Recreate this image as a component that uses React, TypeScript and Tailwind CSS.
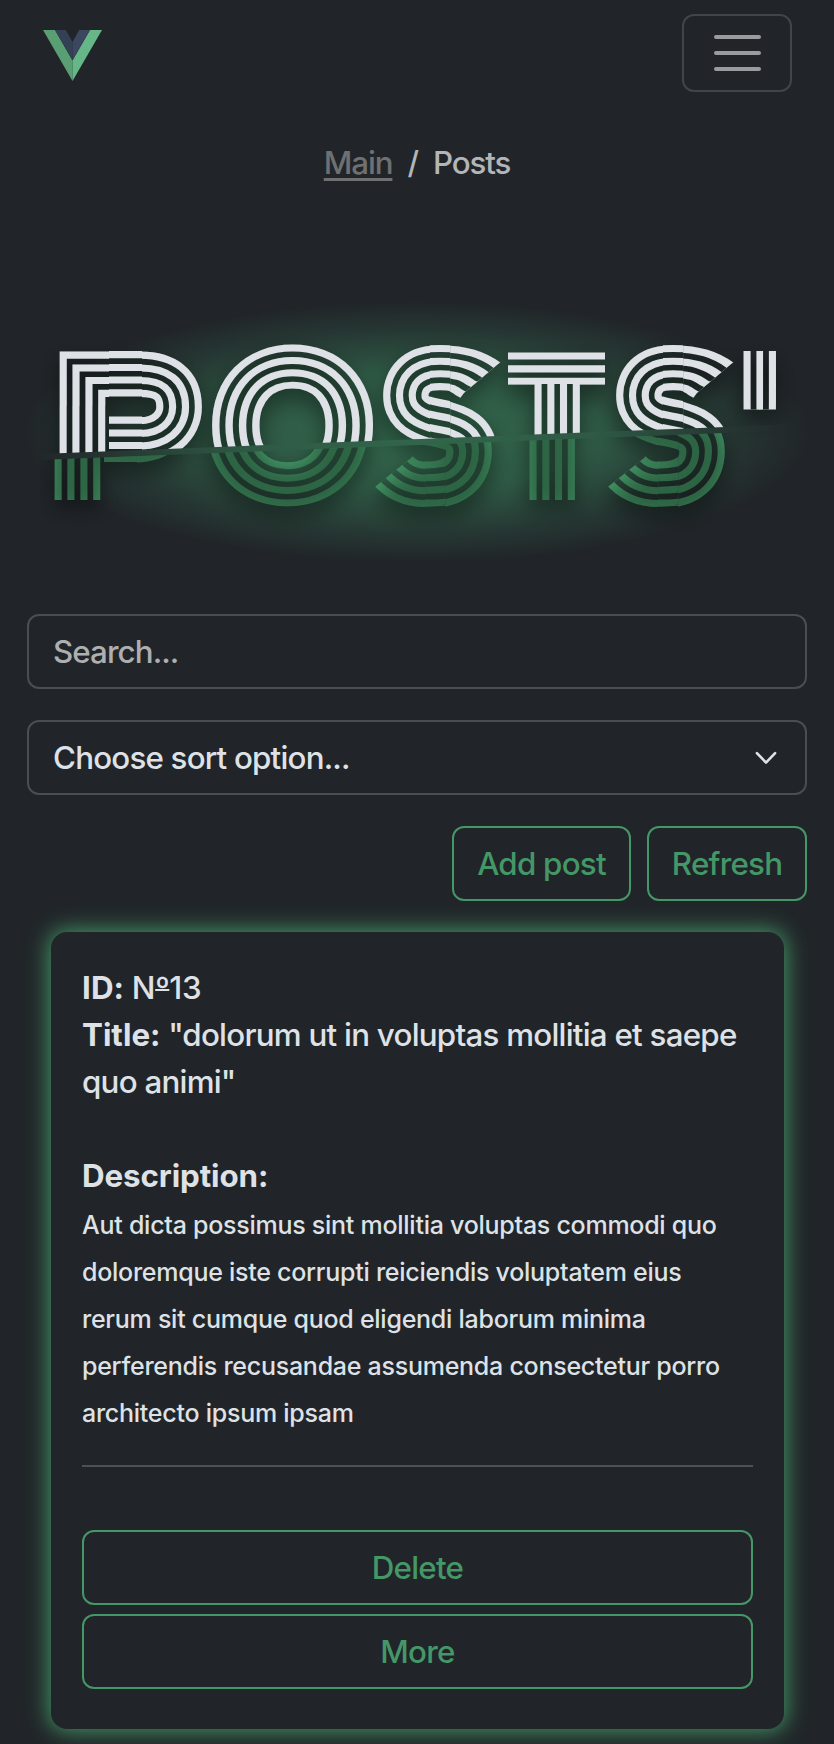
import React from "react";

const green = "border-2 border-[#449766] text-[#449766] rounded-[12px] text-[31.3px] tracking-[-0.75px]";

type Band = { w: number; c: string };

/* Nested stroke widths: four parallel lines around a hairline skeleton. */
const four: Band[] = [
  { w: 45.6, c: "#fff" },
  { w: 31.4, c: "#000" },
  { w: 20, c: "#fff" },
  { w: 5.8, c: "#000" },
];
const three: Band[] = [
  { w: 33, c: "#fff" },
  { w: 18.8, c: "#000" },
  { w: 7.2, c: "#fff" },
];

type Piece = {
  id: string;
  ch: string;
  size: number;
  x: number;
  y: number;
  sx?: number;
  sy?: number;
  k?: number; // scale that the stroke widths are divided by
  clip: string;
  bands?: Band[];
};

/* The S is widened in its middle, and its two ends are drawn out and cut on a slant. */
const sPieces = (id: string, dx: number): Piece[] => {
  const pts = (list: number[][]) => list.map(([x, y]) => `${x + dx},${y}`).join(" ");
  const base = { ch: "S", size: 165, y: 483.5 };
  return [
    { ...base, id: `${id}-left`, x: 390.2 + dx, clip: pts([[370, 335], [430.1, 335], [430.1, 450], [410, 445], [380, 436], [360, 426]]) },
    { ...base, id: `${id}-mid`, x: 363.6 + dx, sx: 1.667, clip: pts([[430.1, 335], [450.1, 335], [450.1, 515], [430.1, 515]]) },
    { ...base, id: `${id}-right`, x: 398.2 + dx, clip: pts([[450.1, 515], [450.1, 401], [470, 406], [500, 415], [510, 515]]) },
    { ...base, id: `${id}-top`, x: 377.4 + dx, sx: 1.4, clip: pts([[450.1, 335], [522, 345], [497, 365], [464, 393], [458, 401], [450.1, 401]]) },
    { ...base, id: `${id}-end`, x: 386.2 + dx, sx: 1.1, clip: pts([[430.1, 515], [356, 506], [381, 486], [416, 458], [422, 450], [430.1, 450]]) },
  ];
};

const pieces: Piece[] = [
  { id: "p-corner", ch: "P", size: 168, x: 62, y: 490.5, clip: "50,340 109,340 109,406 50,406" },
  { id: "p-bar", ch: "P", size: 168, x: -324, y: 490.5, sx: 10, clip: "109,340 142,340 142,470 109,470" },
  { id: "p-bowl", ch: "P", size: 168, x: 94.2, y: 490.5, clip: "142,340 210,340 210,480 142,480" },
  { id: "p-stem", ch: "P", size: 174, x: 61.2, y: 994, sy: 6, clip: "50,406 107,406 107,500 50,500" },
  { id: "o", ch: "O", size: 167, x: 222.6, y: 483.7, sx: 1.07, k: 1.03, clip: "200,335 385,335 385,515 200,515" },
  ...sPieces("s1", 0),
  { id: "t-bar", ch: "T", size: 146, x: 495, y: 476.5, sx: 6, clip: "508,340 605,340 605,384.5 508,384.5" },
  { id: "t-stem", ch: "T", size: 146, x: 515.5, y: 560, sy: 3, clip: "525,384 590,384 590,500 525,500" },
  ...sPieces("s2", 233),
  { id: "quote", ch: "'", size: 146, x: 746, y: 722, sy: 4, clip: "735,351 785,351 785,409.5 735,409.5", bands: three },
];

function Headline() {
  return (
    <svg className="block h-[360px] w-[834px]" viewBox="0 240 834 360" role="img" aria-label="POSTS'">
      <defs>
        <radialGradient id="glow">
          <stop offset="0" stopColor="#357252" stopOpacity="0.85" />
          <stop offset="0.45" stopColor="#357252" stopOpacity="0.68" />
          <stop offset="0.8" stopColor="#357252" stopOpacity="0.22" />
          <stop offset="1" stopColor="#357252" stopOpacity="0" />
        </radialGradient>
        {pieces.map((p) => (
          <clipPath key={p.id} id={`clip-${p.id}`}>
            <polygon points={p.clip} shapeRendering="crispEdges" />
          </clipPath>
        ))}
        <mask id="word" maskUnits="userSpaceOnUse" x="0" y="300" width="834" height="260">
          {pieces.map((p) => (
            <g key={p.id} clipPath={`url(#clip-${p.id})`}>
              {(p.bands ?? four).map((b) => (
                <text
                  key={b.w}
                  transform={`translate(${p.x} ${p.y}) scale(${p.sx ?? 1} ${p.sy ?? 1})`}
                  fontFamily="Lato"
                  fontWeight={100}
                  fontSize={p.size}
                  letterSpacing="0"
                  textRendering="geometricPrecision"
                  stroke={b.c}
                  fill={b.c}
                  strokeWidth={(b.w - 2) / (p.k ?? 1)}
                  strokeLinejoin="miter"
                >
                  {p.ch}
                </text>
              ))}
            </g>
          ))}
        </mask>
        <clipPath id="upper">
          <polygon points="40,300 800,300 800,424 40,454" />
        </clipPath>
        <clipPath id="lower">
          <polygon points="40,460 800,430 800,560 40,560" />
        </clipPath>
        <filter id="soft" filterUnits="userSpaceOnUse" x="0" y="280" width="834" height="300">
          <feGaussianBlur stdDeviation="10" />
        </filter>
      </defs>
      <ellipse cx="417" cy="432" rx="392" ry="130" fill="url(#glow)" />
      <g clipPath="url(#upper)">
        <g filter="url(#soft)" transform="translate(0 10)">
          <rect x="0" y="300" width="834" height="260" fill="#000" opacity="0.6" mask="url(#word)" />
        </g>
        <rect x="0" y="300" width="834" height="260" fill="#dee2e6" mask="url(#word)" />
      </g>
      <g clipPath="url(#lower)">
        <g transform="translate(-5 0)">
          <rect x="0" y="300" width="834" height="260" fill="#449766" mask="url(#word)" />
          <g filter="url(#soft)" transform="translate(0 10)">
            <rect x="0" y="300" width="834" height="260" fill="#000" opacity="0.6" mask="url(#word)" />
          </g>
        </g>
      </g>
    </svg>
  );
}

export default function App() {
  return (
    <div className="flex h-[1744px] w-[834px] flex-col overflow-hidden bg-[#212529] font-['Inter',sans-serif] text-[31.3px] leading-[47px] font-[450] tracking-[-0.7px] text-[#dee2e6]">
      <header className="flex h-[106px] items-center justify-between pr-[42px] pl-[43px]">
        <svg className="mt-1 h-[51px] w-[59px]" viewBox="0 0 59 51">
          <path d="M0 0h12l17.500 30.500V51z" fill="#5a9f73" />
          <path d="M59 0H47L29.500 30.500V51z" fill="#66b788" />
          <path d="M12 0h10.800L29.500 12V30.500z" fill="#344154" />
          <path d="M47 0H36.200L29.500 12V30.500z" fill="#3b475f" />
        </svg>
        <button className="flex h-[78px] w-[110px] flex-col items-center justify-center gap-3 rounded-[12px] border-2 border-[#414549]">
          <span className="h-1 w-[47px] rounded-full bg-[#9b9a9d]" />
          <span className="h-1 w-[47px] rounded-full bg-[#9b9a9d]" />
          <span className="h-1 w-[47px] rounded-full bg-[#9b9a9d]" />
        </button>
      </header>
      <nav className="mt-[34px] flex h-[47px] justify-center gap-[15px] tracking-[-1.1px] text-[#b3b5b8]">
        <a className="text-[#6f7071] underline decoration-[3px] underline-offset-4">Main</a>
        <span>/</span>
        <span>Posts</span>
      </nav>
      <div className="mt-[53px] h-[374px]">
        <Headline />
      </div>
      <div className="flex flex-col gap-[31px] px-[27px]">
        <div className="flex h-[75px] items-center rounded-[12px] border-2 border-[#4a4d52] px-[24px] pt-[2px] tracking-[-0.9px] text-[#adafb1]">
          Search...
        </div>
        <div className="flex h-[75px] items-center justify-between rounded-[12px] border-2 border-[#4a4d52] pr-[25px] pl-[24px]">
          <span className="pt-[2px] tracking-[-0.8px]">Choose sort option...</span>
          <svg className="h-[28px] w-[28px]" viewBox="0 0 16 16" fill="none" stroke="#dee2e6" strokeWidth="1.500" strokeLinecap="round" strokeLinejoin="round">
            <path d="m2.800 5.200 5.200 5.400 5.200-5.400" />
          </svg>
        </div>
        <div className="flex justify-end gap-4">
          <button className={`${green} h-[75px] w-[179px] pt-[2px]`}>Add post</button>
          <button className={`${green} h-[75px] w-[160px] pt-[2px]`}>Refresh</button>
        </div>
      </div>
      <article className="mr-[50px] ml-[51px] mt-[31px] flex h-[797px] shrink-0 flex-col rounded-[16px] px-[31px] pt-[33px] shadow-[0_0_22px_2px_#449766]">
        <p>
          <b className="tracking-[0.1px]">ID:</b>&nbsp;<span className="tracking-[-0.3px]">N<span className="underline decoration-2 underline-offset-[-10px]">º</span>13</span>
        </p>
        <p><b className="tracking-normal">Title:</b> <span className="tracking-[-0.75px]">"dolorum ut in voluptas mollitia et saepe quo animi"</span></p>
        <p className="mt-[47px]"><b className="tracking-[-0.1px]">Description:</b></p>
        <p className="relative top-[2px] text-[25px] tracking-[-0.26px]">
          Aut dicta possimus sint mollitia voluptas commodi quo doloremque iste corrupti reiciendis voluptatem eius
          rerum sit cumque quod eligendi laborum minima perferendis recusandae assumenda consectetur porro
          architecto ipsum ipsam
        </p>
        <hr className="mt-[30px] border-t-2 border-[#4d5055]" />
        <button className={`${green} mt-[63px] h-[75px] pt-[2px]`}>Delete</button>
        <button className={`${green} mt-[9px] h-[75px] pt-[2px]`}>More</button>
      </article>
    </div>
  );
}
